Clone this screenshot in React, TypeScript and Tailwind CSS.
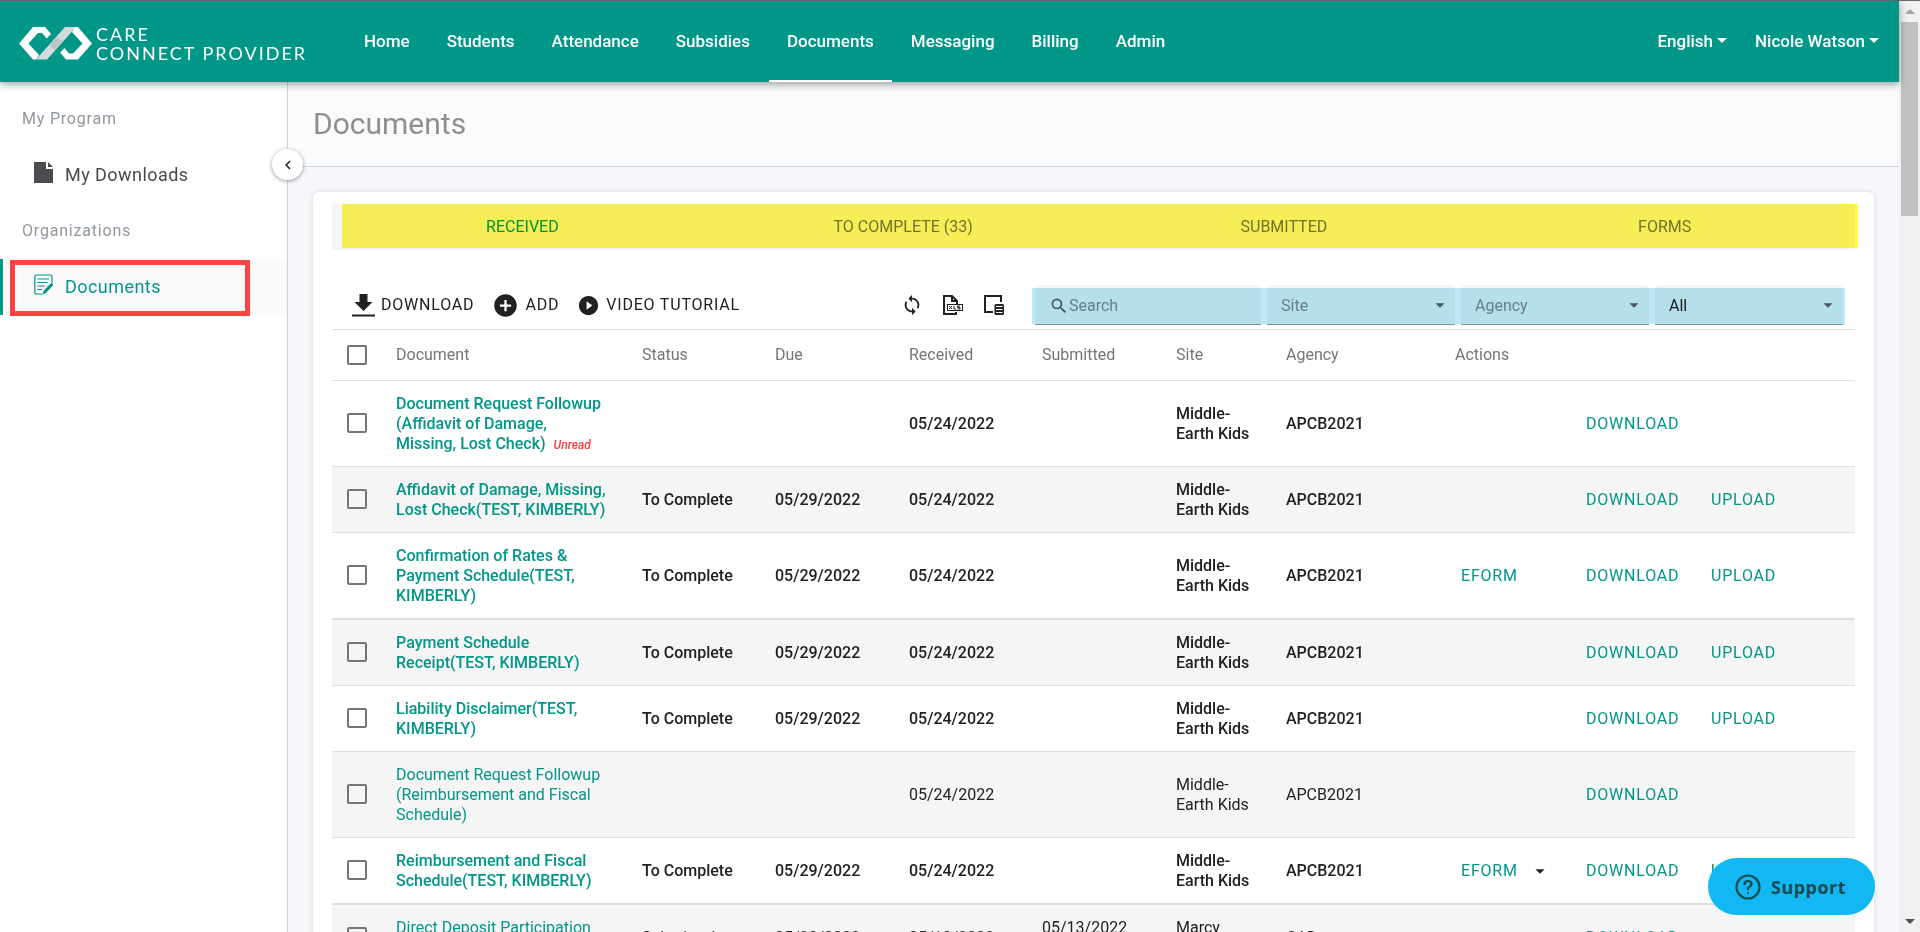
import { MdAddCircle, MdPlayCircleFilled, MdSync, MdSearch, MdArrowDropDown, MdChevronLeft } from "react-icons/md";

type Row = {
  doc: string;
  status?: string;
  due?: string;
  received: string;
  submitted?: string;
  site: string;
  agency: string;
  bold?: boolean;
  unread?: boolean;
  eform?: boolean;
  menu?: boolean;
  upload?: boolean;
  thick?: boolean;
};

const rows: Row[] = [
  { doc: "Document Request Followup (Affidavit of Damage, Missing, Lost Check)", received: "05/24/2022", site: "Middle-Earth Kids", agency: "APCB2021", bold: true, unread: true },
  { doc: "Affidavit of Damage, Missing, Lost Check(TEST, KIMBERLY)", status: "To Complete", due: "05/29/2022", received: "05/24/2022", site: "Middle-Earth Kids", agency: "APCB2021", bold: true, upload: true },
  { doc: "Confirmation of Rates & Payment Schedule(TEST, KIMBERLY)", status: "To Complete", due: "05/29/2022", received: "05/24/2022", site: "Middle-Earth Kids", agency: "APCB2021", bold: true, eform: true, upload: true, thick: true },
  { doc: "Payment Schedule Receipt(TEST, KIMBERLY)", status: "To Complete", due: "05/29/2022", received: "05/24/2022", site: "Middle-Earth Kids", agency: "APCB2021", bold: true, upload: true },
  { doc: "Liability Disclaimer(TEST, KIMBERLY)", status: "To Complete", due: "05/29/2022", received: "05/24/2022", site: "Middle-Earth Kids", agency: "APCB2021", bold: true, upload: true },
  { doc: "Document Request Followup (Reimbursement and Fiscal Schedule)", received: "05/24/2022", site: "Middle-Earth Kids", agency: "APCB2021" },
  { doc: "Reimbursement and Fiscal Schedule(TEST, KIMBERLY)", status: "To Complete", due: "05/29/2022", received: "05/24/2022", site: "Middle-Earth Kids", agency: "APCB2021", bold: true, eform: true, menu: true, upload: true, thick: true },
  { doc: "Direct Deposit Participation Form(TEST, KIMBERLY)", status: "Submitted", due: "05/23/2022", received: "05/13/2022", submitted: "05/13/2022 10:24 AM", site: "Marcy Daycare", agency: "CAD" },
];

const nav = ["Home", "Students", "Attendance", "Subsidies", "Documents", "Messaging", "Billing", "Admin"];
const tabs = ["RECEIVED", "TO COMPLETE (33)", "SUBMITTED", "FORMS"];

function Logo() {
  return (
    <a href="#" className="flex w-[346px] shrink-0 items-center pt-1 pl-[19px]">
      <svg width="73" height="33" viewBox="0 0 73 33" aria-hidden="true">
        <path d="M14 0H26L32 7 27.500 11.500 23 6H19L9.500 16.500 20 28 17 32.500H14L0 16.500Z" fill="#fff" />
        <path d="M59 32.500H47L41 25.500 45.500 21 50 26.500H54L63.500 16.500 53 5 56 0H59L73 16.500Z" fill="#fff" />
        <path d="M46 0H57L28 32.500H17Z" fill="#d3dbde" />
        <path d="M37 10 44 14.500 36 23.500 30 18Z" fill="#bcc6ca" />
      </svg>
      <span className="ml-1 font-[Lato,sans-serif] text-lg leading-[19px] tracking-[2px] whitespace-nowrap text-white">
        CARE
        <br />
        CONNECT PROVIDER
      </span>
    </a>
  );
}

function Caret() {
  return <span className="ml-1 inline-block border-x-[5px] border-t-[5px] border-x-transparent border-t-current align-[4px]" />;
}

function Check({ label }: { label: string }) {
  return (
    <input
      type="checkbox"
      aria-label={label}
      className="block size-5 appearance-none rounded-xs border-2 border-[#757575] bg-transparent checked:bg-[#009688]"
    />
  );
}

function Filter({ label, muted }: { label: string; muted?: boolean }) {
  return (
    <label className="relative h-10 w-[188px] shrink-0 rounded-t border-b border-[#8c8c8c] bg-[#f5f5f5]">
      <select
        aria-label={`${label} filter`}
        className={`h-full w-full appearance-none bg-transparent px-3.5 pt-0.5 text-base ${muted ? "text-[#8c8c8c]" : "text-[#212121]"}`}
      >
        <option>{label}</option>
      </select>
      <MdArrowDropDown className="pointer-events-none absolute top-[9px] right-1 text-[#616161]" size={22} />
    </label>
  );
}

export default function App() {
  return (
    <div className="flex h-screen flex-col overflow-hidden border-t border-[#666666] bg-[#f5f7fb] font-[Roboto,sans-serif] text-base text-[#212121]">
      <div className="flex min-h-0 flex-1">
        <div className="flex min-w-0 flex-1 flex-col">
          <header className="relative z-10 flex h-[81px] shrink-0 bg-[#009688] text-[17px] text-white shadow-[0_2px_8px_rgba(0,0,0,0.4)]">
            <Logo />
            <nav className="flex gap-px font-medium">
              {nav.map((n) => (
                <a
                  key={n}
                  href="#"
                  className={`flex items-center border-b-2 px-[18px] pt-0.5 ${n === "Documents" ? "border-white" : "border-transparent"}`}
                >
                  {n}
                </a>
              ))}
            </nav>
            <div className="ml-auto flex items-center gap-7 pr-5 font-medium">
              <button>
                English
                <Caret />
              </button>
              <button>
                Nicole Watson
                <Caret />
              </button>
            </div>
          </header>

          <div className="flex min-h-0 flex-1">
            <aside className="relative w-[288px] shrink-0 border-r border-[#cfd4da] bg-white pt-[25px]">
              <h2 className="px-[22px] leading-6 tracking-wider text-[#8f979e]">My Program</h2>
              <a href="#" className="mt-4 flex h-14 items-center pl-[34px] text-lg tracking-wide text-[#4a4a4a]">
                <svg width="19" height="21" viewBox="0 0 19 21" className="mr-3 mb-1.5 shrink-0" aria-hidden="true">
                  <path d="M0 0h12v7h7v14H0zM14 0l5 5h-5z" fill="#4a4c50" />
                </svg>
                My Downloads
              </a>
              <h2 className="mt-4 px-[22px] leading-6 tracking-wider text-[#8f979e]">Organizations</h2>
              <a href="#" className="mt-4 flex h-14 items-center border-l-[3px] border-[#009688] bg-[#fafafa] pl-[31px] text-lg tracking-wide text-[#009688]">
                <svg width="19" height="21" viewBox="0 0 19 21" className="mr-3 mb-1.5 shrink-0" fill="none" stroke="#009688" strokeWidth="1.2" aria-hidden="true">
                  <path d="M8.500 20H2.500Q.8 20 .8 18.500V2.500Q.8 1 2.500 1H16.500Q18 1 18 2.500V8.500M3.500 5H15M3.500 8.500H13.500M3.500 12H11M3.500 15.500H8" />
                  <path d="M9.500 19.500l1-3L17.500 9.500l1.200 1.200L12 18z" fill="#009688" />
                </svg>
                Documents
              </a>
              <div className="pointer-events-none absolute top-[178px] left-[10px] h-14 w-[240px] border-[5px] border-[#ff4242]" />
              <button aria-label="Collapse menu" className="absolute top-[67px] -right-4 z-10 flex size-[31px] items-center justify-center rounded-full bg-white shadow-[0_1px_4px_rgba(0,0,0,0.4)]">
                <MdChevronLeft size={18} />
              </button>
            </aside>

            <main className="min-w-0 flex-1">
              <div className="flex h-[85px] items-center border-b border-[#ccd8e4] bg-[#fafbfd] pl-[25px]">
                <h1 className="text-3xl text-[#8f8f8f]">Documents</h1>
              </div>
              <section className="mt-[25px] mr-[25px] ml-[25px] rounded-md bg-white px-[19px] pt-3 shadow-[0_0_5px_rgba(0,0,0,0.12)]">
                <div className="relative">
                  <div role="tablist" className="grid h-[46px] grid-cols-4 bg-[#f5f5f5]">
                    {tabs.map((t, i) => (
                      <button key={t} role="tab" className={i === 0 ? "text-[#009688]" : "text-[#757575]"}>
                        {t}
                      </button>
                    ))}
                  </div>
                  <div className="pointer-events-none absolute top-0 -right-[3px] left-[10px] h-11 bg-[#fff859] mix-blend-multiply" />
                </div>

                <div className="flex h-20 items-end justify-between border-b border-[#dedede] pr-3 pb-1">
                  <div className="flex h-10 items-center gap-[18px] pl-5 tracking-wider">
                    <button className="flex items-center gap-1.5">
                      <svg width="23" height="23" viewBox="0 0 23 23" fill="#212121" aria-hidden="true">
                        <path d="M7.500 0h8v8h5L11.500 17 2.500 8h5zM0 20.500h23v2H0z" />
                      </svg>
                      DOWNLOAD
                    </button>
                    <button className="flex items-center gap-1.5">
                      <MdAddCircle size={27} />
                      ADD
                    </button>
                    <button className="flex items-center gap-1.5">
                      <MdPlayCircleFilled size={23} />
                      VIDEO TUTORIAL
                    </button>
                  </div>
                  <div className="flex items-center">
                    <div className="mr-[30px] flex items-center gap-5">
                      <button aria-label="Refresh">
                        <MdSync size={22} />
                      </button>
                      <button aria-label="Export to XLSX">
                        <svg width="21" height="20" viewBox="0 0 21 20" fill="none" stroke="#212121" strokeWidth="2" aria-hidden="true">
                          <path d="M14 9V6L9 1H1V19H13V17M9 1V6H14" />
                          <rect x="4.500" y="9.500" width="15" height="6" fill="#fff" strokeWidth="1" />
                          <path d="M6 11l3 3M9 11l-3 3M11 11v3h2M17 11h-2.500v1.500H17V14h-2.500" strokeWidth="1" />
                        </svg>
                      </button>
                      <button aria-label="Choose columns">
                        <svg width="21" height="20" viewBox="0 0 21 20" aria-hidden="true">
                          <path d="M9 17H1V1H17V7" fill="none" stroke="#212121" strokeWidth="2" />
                          <rect x="10.500" y="9" width="9.500" height="11" rx="1.500" fill="#212121" />
                          <path d="M12 11.500h6.500M12 14.500h6.500M12 17.500h6.500" stroke="#fff" strokeWidth="1" />
                        </svg>
                      </button>
                    </div>
                    <div className="relative flex gap-1.5">
                      <label className="flex h-10 w-[226px] shrink-0 items-center rounded-t border-b border-[#8c8c8c] bg-[#f5f5f5] pt-0.5 pl-3.5">
                        <MdSearch size={20} className="text-[#616161]" />
                        <input aria-label="Search" placeholder="Search" className="min-w-0 flex-1 bg-transparent outline-none placeholder:text-[#8c8c8c]" />
                      </label>
                      <Filter label="Site" muted />
                      <Filter label="Agency" muted />
                      <Filter label="All" />
                      <div className="pointer-events-none absolute top-[3px] -right-0.5 bottom-px -left-[3px] bg-[#bde8f5] mix-blend-multiply" />
                    </div>
                  </div>
                </div>

                <table className="w-full table-fixed border-collapse text-left leading-5">
                  <colgroup>
                    <col className="w-[64px]" />
                    <col className="w-[246px]" />
                    <col className="w-[133px]" />
                    <col className="w-[134px]" />
                    <col className="w-[133px]" />
                    <col className="w-[134px]" />
                    <col className="w-[110px]" />
                    <col className="w-[169px]" />
                    <col className="w-[131px]" />
                    <col className="w-[125px]" />
                    <col />
                  </colgroup>
                  <thead>
                    <tr className="h-[50px] border-b border-[#dedede] text-[#757575]">
                      <th className="pl-[15px]">
                        <Check label="Select all documents" />
                      </th>
                      {["Document", "Status", "Due", "Received", "Submitted", "Site", "Agency", "Actions"].map((h) => (
                        <th key={h} className="font-normal">
                          {h}
                        </th>
                      ))}
                      <td />
                      <td />
                    </tr>
                  </thead>
                  <tbody>
                    {rows.map((r) => (
                      <tr
                        key={r.doc}
                        className={`border-[#dedede] even:bg-[#f5f5f5] ${r.thick ? "border-b-2" : "border-b"} ${r.bold ? "font-medium" : ""}`}
                      >
                        <td className="pl-[15px]">
                          <Check label={`Select ${r.doc}`} />
                        </td>
                        <td className="pt-[13px] pr-8 pb-3">
                          <a href="#" className="text-[#009688]">
                            {r.doc}
                          </a>
                          {r.unread && <em className="ml-2 text-xs text-[#ff3b3b]">Unread</em>}
                        </td>
                        <td className="pt-px">{r.status}</td>
                        <td className="pt-px">{r.due}</td>
                        <td className="pt-px">{r.received}</td>
                        <td className="pt-px pr-8">{r.submitted}</td>
                        <td className="pt-px pr-5">{r.site}</td>
                        <td className="pt-px">{r.agency}</td>
                        <td className="pt-0.5 pl-1.5 font-normal tracking-wider">
                          {r.eform && (
                            <button className="flex items-center text-[#009688]">
                              EFORM
                              {r.menu && <MdArrowDropDown size={22} className="ml-[11px] text-[#212121]" />}
                            </button>
                          )}
                        </td>
                        <td className="pt-0.5 font-normal tracking-wider">
                          <button className="text-[#009688]">DOWNLOAD</button>
                        </td>
                        <td className="pt-0.5 font-normal tracking-wider">{r.upload && <button className="text-[#009688]">UPLOAD</button>}</td>
                      </tr>
                    ))}
                  </tbody>
                </table>
              </section>
            </main>
          </div>
        </div>

        <div aria-hidden="true" className="flex w-[21px] shrink-0 flex-col items-center bg-[#f1f1f1]">
          <div className="flex h-[21px] items-center">
            <div className="border-x-[5px] border-b-[5px] border-x-transparent border-b-[#a3a3a3]" />
          </div>
          <div className="h-[194px] w-[17px] bg-[#c1c1c1]" />
          <div className="mt-auto flex h-[21px] items-center">
            <div className="border-x-[5px] border-t-[5px] border-x-transparent border-t-[#505050]" />
          </div>
        </div>
      </div>

      <button className="fixed right-[45px] bottom-[17px] z-20 flex h-[57px] w-[167px] items-center justify-center gap-2.5 rounded-full bg-[#11b8f3] pr-0.5 font-['Open_Sans',sans-serif] text-lg font-bold tracking-wide text-[#17494d]">
        <svg width="26" height="26" viewBox="0 0 26 26" fill="none" stroke="currentColor" strokeWidth="2.200" strokeLinecap="round" aria-hidden="true">
          <circle cx="13" cy="13" r="11.500" />
          <path d="M9.500 10.200Q9.500 7 13 7T16.500 10Q16.500 11.500 14.800 12.500T13 15.200M13 19v.1" />
        </svg>
        Support
      </button>
    </div>
  );
}
